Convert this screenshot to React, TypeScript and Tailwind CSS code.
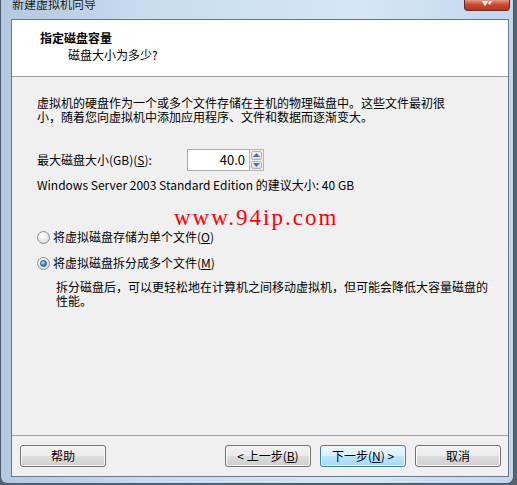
import type { ReactNode } from "react";

const cjk = "font-['Noto_Sans_CJK_SC',_'Noto_Sans',_sans-serif]";

function Radio({ checked }: { checked?: boolean }) {
  return (
    <span className="flex h-[13px] w-[13px] items-center justify-center rounded-full border border-[#8f8f8f] bg-[radial-gradient(circle_at_40%_35%,#ffffff,#e4e4e4_60%,#cfcfcf)]">
      {checked && (
        <span className="h-[7px] w-[7px] rounded-full border border-[#1c4f86] bg-[radial-gradient(circle_at_35%_30%,#b8e2ff,#3a8ed8_55%,#0d4f95)]" />
      )}
    </span>
  );
}

function Button({ children, primary }: { children: ReactNode; primary?: boolean }) {
  return (
    <button
      className={
        primary
          ? "flex h-[22px] w-[86px] items-center justify-center rounded-[3px] border border-[#3c7fb1] bg-[linear-gradient(#eaf6fd,#d9f0fc_50%,#bee6fd_50%,#a7d9f5)] text-[12px] text-black shadow-[inset_0_0_0_1px_#f4fbff]"
          : "flex h-[22px] w-[86px] items-center justify-center rounded-[3px] border border-[#707070] bg-[linear-gradient(#f2f2f2,#ebebeb_50%,#dddddd_50%,#cfcfcf)] text-[12px] text-black shadow-[inset_0_0_0_1px_#fcfcfc]"
      }
    >
      {children}
    </button>
  );
}

function Spinner() {
  return (
    <div className="flex h-[22px]">
      <div className="flex w-[62px] items-center justify-end border border-[#abadb3] border-r-0 bg-white pr-[4px] text-[13px] text-black">
        40.0
      </div>
      <div className="flex w-[15px] flex-col gap-[1px] border border-[#b5b5b5] bg-[#f0f0f0] p-[1px]">
        <div className="flex flex-1 items-center justify-center rounded-[2px] border border-[#b0b0b0] bg-[linear-gradient(#f7f7f7,#dcdcdc)]">
          <svg width="7" height="4" viewBox="0 0 7 4">
            <path d="M3.5 0 L7 4 L0 4 Z" fill="#4d6f9c" />
          </svg>
        </div>
        <div className="flex flex-1 items-center justify-center rounded-[2px] border border-[#b0b0b0] bg-[linear-gradient(#f7f7f7,#dcdcdc)]">
          <svg width="7" height="4" viewBox="0 0 7 4">
            <path d="M0 0 L7 0 L3.5 4 Z" fill="#4d6f9c" />
          </svg>
        </div>
      </div>
    </div>
  );
}

export default function App() {
  return (
    <div className={`relative h-[485px] w-[517px] overflow-hidden bg-[#59636f] ${cjk}`}>
      <div className="flex h-[484px] w-[514px] flex-col rounded-b-[7px] border border-t-0 border-[#4a586b] bg-[linear-gradient(90deg,#b3c9df,#c9dcf0_30%,#d6e6f7_70%,#c2d7ed)]">
        {/* title bar */}
        <div className="flex h-[19px] items-start justify-between pl-[11px] pr-[3px]">
          <span className="-mt-[3px] text-[12px] leading-[14px] text-[#1b1b1b]">新建虚拟机向导</span>
          <div className="relative flex h-[11px] w-[46px] items-end justify-center overflow-hidden rounded-b-[4px] border border-t-0 border-[#70291f] bg-[linear-gradient(#e29a86,#c94a32_45%,#b9341e)]">
            <svg width="14" height="10" viewBox="0 0 14 10" className="-mb-[1px]">
              <path d="M1 -4 L5 3 L9 -4 M13 -4 L9 3" stroke="#f4e9e6" strokeWidth="2.6" fill="none" />
            </svg>
          </div>
        </div>

        {/* client area */}
        <div className="ml-[10px] flex h-[458px] w-[498px] flex-col border border-[#66788d] bg-[#f0f0f0]">
          <div className="h-[57px] border-b border-[#a0a0a0] bg-white pl-[28px] pt-[10px]">
            <div className="text-[12px] font-bold leading-[16px] text-black">指定磁盘容量</div>
            <div className="pl-[28px] pt-[1px] text-[12px] leading-[16px] text-black">磁盘大小为多少?</div>
          </div>

          <div className="flex flex-1 flex-col pl-[25px] pt-[19px] text-[12px] leading-[14px] text-black">
            <p>
              虚拟机的硬盘作为一个或多个文件存储在主机的物理磁盘中。这些文件最初很
              <br />
              小，随着您向虚拟机中添加应用程序、文件和数据而逐渐变大。
            </p>

            <div className="mt-[25px] flex items-center">
              <span className="w-[150px]">
                最大磁盘大小(GB)(<span className="underline">S</span>):
              </span>
              <Spinner />
            </div>

            <p className="mt-[7px]">Windows Server 2003 Standard Edition 的建议大小: 40 GB</p>

            <div className="mt-[38px] flex items-center gap-[3px]">
              <Radio />
              <span>
                将虚拟磁盘存储为单个文件(<span className="underline">O</span>)
              </span>
            </div>
            <div className="mt-[12px] flex items-center gap-[3px]">
              <Radio checked />
              <span>
                将虚拟磁盘拆分成多个文件(<span className="underline">M</span>)
              </span>
            </div>
            <p className="mt-[10px] pl-[19px]">
              拆分磁盘后，可以更轻松地在计算机之间移动虚拟机，但可能会降低大容量磁盘的
              <br />
              性能。
            </p>
          </div>

          <div className="flex h-[41px] items-start border-t border-[#a0a0a0] pl-[8px] pr-[7px] pt-[9px]">
            <Button>帮助</Button>
            <div className="ml-auto flex gap-[9px]">
              <Button>
                &lt; 上一步(<span className="underline">B</span>)
              </Button>
              <Button primary>
                下一步(<span className="underline">N</span>) &gt;
              </Button>
              <Button>取消</Button>
            </div>
          </div>
        </div>
      </div>

      {/* watermark over the page */}
      <div className="absolute left-[174px] top-[205px] font-['Liberation_Serif',_serif] text-[23px] leading-[26px] tracking-[2px] text-[#ff0000]">
        www.94ip.com
      </div>
    </div>
  );
}
